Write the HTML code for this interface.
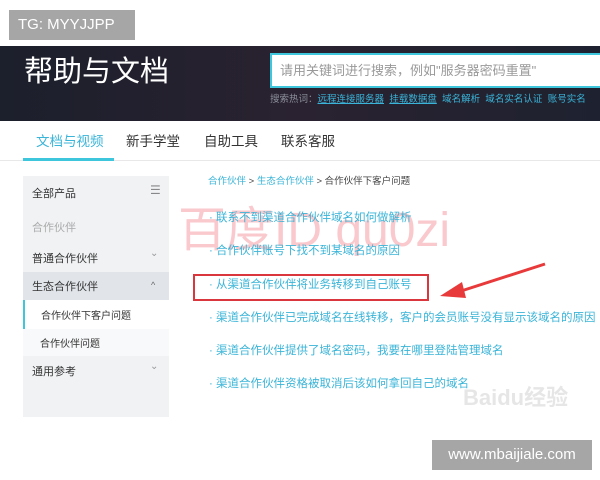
<!DOCTYPE html>
<html><head><meta charset="utf-8"><style>
*{margin:0;padding:0;box-sizing:border-box}
body{width:600px;height:480px;background:#fff;position:relative;overflow:hidden;font-family:"Liberation Sans","Noto Sans CJK SC",sans-serif}
.a{position:absolute;white-space:nowrap}
</style></head><body>
<div class="a" style="left:9px;top:10px;width:126px;height:30px;background:#a6a6a6;color:#fff;font-size:15px;line-height:30px;padding-left:9px">TG: MYYJJPP</div>
<div class="a" style="left:0;top:46px;width:600px;height:75px;background:linear-gradient(90deg,#1c1f2c,#2a2230 50%,#1e2230)"></div>
<div class="a" style="left:24px;top:55px;color:#fff;font-size:29px;line-height:34px">帮助与文档</div>
<div class="a" style="left:270px;top:53px;width:340px;height:35px;background:#fff;border:2px solid #3ec6dc"></div>
<div class="a" style="left:280px;top:62px;color:#999;font-size:13px;line-height:17px">请用关键词进行搜索，例如"服务器密码重置"</div>
<div class="a" style="left:270px;top:93px;font-size:9.5px;line-height:13px;color:#8a8f99">搜索热词：<span style="color:#3ab4d8;text-decoration:underline">远程连接服务器</span>&nbsp;&nbsp;<span style="color:#3ab4d8;text-decoration:underline">挂载数据盘</span>&nbsp;&nbsp;<span style="color:#3ab4d8">域名解析</span>&nbsp;&nbsp;<span style="color:#3ab4d8">域名实名认证</span>&nbsp;&nbsp;<span style="color:#3ab4d8">账号实名</span></div>
<div class="a" style="left:36px;top:133px;font-size:13.5px;line-height:18px;color:#3ab4d8">文档与视频</div>
<div class="a" style="left:126px;top:133px;font-size:13.5px;line-height:18px;color:#333">新手学堂</div>
<div class="a" style="left:204px;top:133px;font-size:13.5px;line-height:18px;color:#333">自助工具</div>
<div class="a" style="left:281px;top:133px;font-size:13.5px;line-height:18px;color:#333">联系客服</div>
<div class="a" style="left:0;top:160px;width:600px;height:1px;background:#e8e8e8"></div>
<div class="a" style="left:23px;top:158px;width:91px;height:3px;background:#3ec6dc"></div>
<div class="a" style="left:23px;top:176px;width:146px;height:241px;background:#f0f2f4"></div>
<div class="a" style="left:23px;top:272px;width:146px;height:28px;background:#e1e5ea"></div>
<div class="a" style="left:23px;top:300px;width:146px;height:29px;background:#fff;border-left:2px solid #3ec6dc"></div>
<div class="a" style="left:23px;top:329px;width:146px;height:27px;background:#f8f9fa"></div>
<div class="a" style="left:32px;top:185px;font-size:11px;color:#333">全部产品</div>
<div class="a" style="left:150px;top:183px;font-size:12px;color:#888">☰</div>
<div class="a" style="left:32px;top:219px;font-size:11px;color:#aaa">合作伙伴</div>
<div class="a" style="left:32px;top:250px;font-size:11px;color:#333">普通合作伙伴</div>
<div class="a" style="left:150px;top:248px;font-size:10px;color:#999">⌄</div>
<div class="a" style="left:32px;top:278px;font-size:11px;color:#333">生态合作伙伴</div>
<div class="a" style="left:151px;top:280px;font-size:9px;color:#666">^</div>
<div class="a" style="left:41px;top:307px;font-size:10px;color:#333">合作伙伴下客户问题</div>
<div class="a" style="left:40px;top:335px;font-size:10px;color:#333">合作伙伴问题</div>
<div class="a" style="left:32px;top:363px;font-size:11px;color:#333">通用参考</div>
<div class="a" style="left:150px;top:361px;font-size:10px;color:#999">⌄</div>
<div class="a" style="left:208px;top:173px;font-size:9.5px;color:#444"><span style="color:#3ab4d8">合作伙伴</span> &gt; <span style="color:#3ab4d8">生态合作伙伴</span> &gt; 合作伙伴下客户问题</div>
<div class="a" style="left:178px;top:203px;font-size:48px;line-height:55px;color:rgba(240,120,130,.4)">百度ID qu0zi</div>
<div class="a" style="left:209px;top:210px;font-size:11.5px;line-height:16px;color:#3ab4d8">
<div style="height:33.3px">· 联系不到渠道合作伙伴域名如何做解析</div>
<div style="height:33.3px">· 合作伙伴账号下找不到某域名的原因</div>
<div style="height:33.3px">· 从渠道合作伙伴将业务转移到自己账号</div>
<div style="height:33.3px">· 渠道合作伙伴已完成域名在线转移，客户的会员账号没有显示该域名的原因</div>
<div style="height:33.3px">· 渠道合作伙伴提供了域名密码，我要在哪里登陆管理域名</div>
<div style="height:33.3px">· 渠道合作伙伴资格被取消后该如何拿回自己的域名</div>
</div>
<div class="a" style="left:193px;top:274px;width:236px;height:27px;border:2px solid #d9363e"></div>
<svg class="a" style="left:0;top:0" width="600" height="480"><line x1="545" y1="264" x2="458" y2="292" stroke="#e83a3a" stroke-width="3"/><polygon points="440,296 462,282 466,298" fill="#e83a3a"/></svg>
<div class="a" style="left:463px;top:380px;font-size:22px;color:rgba(200,200,200,.45);font-weight:bold">Baidu经验</div>
<div class="a" style="left:432px;top:440px;width:160px;height:30px;background:#a6a6a6;color:#fff;font-size:15px;line-height:30px;text-align:center">www.mbaijiale.com</div>
</body></html>
